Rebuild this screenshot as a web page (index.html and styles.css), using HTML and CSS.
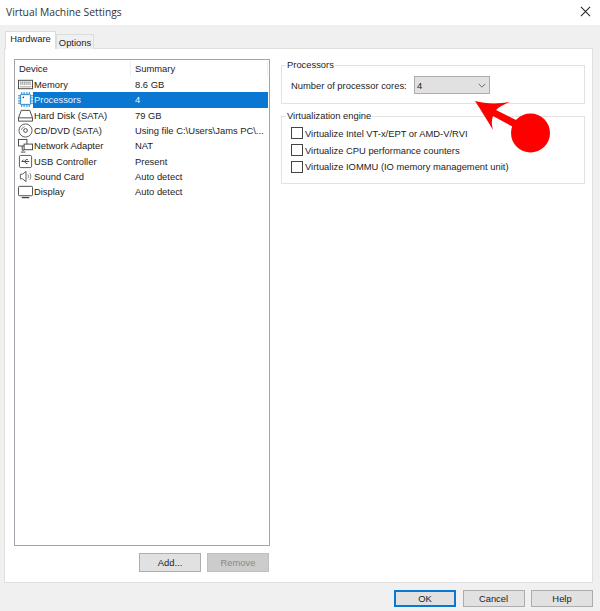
FILE: index.html
```html
<!DOCTYPE html>
<html lang="en">
<head>
  <meta charset="UTF-8" />
  <title>Virtual Machine Settings</title>
  <link rel="stylesheet" href="styles.css">
</head>
<body>
  <div class="window">
    <div class="titlebar">
      <span class="title">Virtual Machine Settings</span>
      <svg class="close" width="11" height="11" viewBox="0 0 12 12"><path d="M1 1L11 11M11 1L1 11" stroke="#222" stroke-width="1.1" fill="none"/></svg>
    </div>

    <div class="tabs">
      <div class="tab active">Hardware</div>
      <div class="tab">Options</div>
    </div>

    <div class="panel">
      <div class="left">
        <div class="list">
          <div class="list-head">
            <span class="col-device">Device</span>
            <span class="col-summary">Summary</span>
          </div>

          <div class="row">
            <svg class="icon" viewBox="0 0 16 16"><rect x="0.5" y="3.5" width="15" height="9" fill="#fff" stroke="#444"/><path d="M2 5.500h12M2 7.500h12" stroke="#666" stroke-dasharray="1.500 .5"/><path d="M2 10.500h12" stroke="#999"/></svg>
            <div class="row-body"><span class="name">Memory</span><span class="value">8.6 GB</span></div>
          </div>
          <div class="row selected">
            <svg class="icon" viewBox="0 0 16 16"><path d="M4 0v16M6.500 0v16M9.500 0v16M12 0v16M0 4h16M0 6.500h16M0 9.500h16M0 12h16" stroke="#2b86c8"/><rect x="2.500" y="2.500" width="11" height="11" rx="1" fill="#d7ecfa" stroke="#1f7fc4"/><rect x="4" y="4" width="8" height="8" fill="#fff"/><rect x="5" y="5" width="1.500" height="1.500" fill="#333"/></svg>
            <div class="row-body"><span class="name">Processors</span><span class="value">4</span></div>
          </div>
          <div class="row">
            <svg class="icon" viewBox="0 0 16 16"><path d="M3.500 2.500h9l3 8v3.500h-15v-3.500z" fill="#fff" stroke="#444"/><path d="M.5 10.500h15" stroke="#444"/></svg>
            <div class="row-body"><span class="name">Hard Disk (SATA)</span><span class="value">79 GB</span></div>
          </div>
          <div class="row">
            <svg class="icon" viewBox="0 0 16 16"><circle cx="8" cy="8" r="7" fill="#fff" stroke="#555"/><circle cx="8" cy="8" r="2" fill="none" stroke="#444"/><path d="M3.500 7.500a4.500 4.500 0 0 1 3.500-3.500" stroke="#888" fill="none"/></svg>
            <div class="row-body"><span class="name">CD/DVD (SATA)</span><span class="value">Using file C:\Users\Jams PC\...</span></div>
          </div>
          <div class="row">
            <svg class="icon" viewBox="0 0 16 16"><rect x="0.5" y="1.500" width="9" height="7" fill="#fff" stroke="#444"/><rect x="6.500" y="6.500" width="9" height="6" fill="#fff" stroke="#444"/><path d="M4.500 8.500v4.500h2M3 15h5" stroke="#444" fill="none"/></svg>
            <div class="row-body"><span class="name">Network Adapter</span><span class="value">NAT</span></div>
          </div>
          <div class="row">
            <svg class="icon" viewBox="0 0 16 16"><rect x="1.500" y="1.500" width="13" height="13" rx="1.500" fill="#fff" stroke="#555"/><path d="M4 8h8M4 8l2-2M7 8l1.500-2h2M7 8l1.500 2h1.500" stroke="#444" fill="none"/></svg>
            <div class="row-body"><span class="name">USB Controller</span><span class="value">Present</span></div>
          </div>
          <div class="row">
            <svg class="icon" viewBox="0 0 16 16"><path d="M2.500 5.500h2.500l3.500-3v11l-3.500-3h-2.500z" fill="#fff" stroke="#555"/><path d="M10.500 6c1 1.300 1 2.700 0 4M12.500 4.500c1.600 2.200 1.600 4.800 0 7" stroke="#777" fill="none"/></svg>
            <div class="row-body"><span class="name">Sound Card</span><span class="value">Auto detect</span></div>
          </div>
          <div class="row">
            <svg class="icon" viewBox="0 0 16 16"><rect x="0.500" y="2.500" width="15" height="10" rx="1" fill="#fff" stroke="#444"/><path d="M4 14.500h8" stroke="#444" stroke-width="1.400"/></svg>
            <div class="row-body"><span class="name">Display</span><span class="value">Auto detect</span></div>
          </div>
        </div>

        <div class="list-buttons">
          <button class="btn">Add...</button>
          <button class="btn disabled">Remove</button>
        </div>
      </div>

      <div class="right">
        <fieldset class="group group-cpu">
          <legend>Processors</legend>
          <div class="cores">
            <span class="cores-label">Number of processor cores:</span>
            <div class="combo">
              <span>4</span>
              <svg width="8" height="5" viewBox="0 0 9 6"><path d="M.5 1L4.500 5L8.500 1" stroke="#555" fill="none"/></svg>
            </div>
          </div>
        </fieldset>

        <fieldset class="group group-virt">
          <legend>Virtualization engine</legend>
          <label class="check"><span class="box"></span>Virtualize Intel VT-x/EPT or AMD-V/RVI</label>
          <label class="check"><span class="box"></span>Virtualize CPU performance counters</label>
          <label class="check"><span class="box"></span>Virtualize IOMMU (IO memory management unit)</label>
        </fieldset>
      </div>
    </div>

    <div class="footer">
      <button class="btn primary">OK</button>
      <button class="btn">Cancel</button>
      <button class="btn">Help</button>
    </div>

    <!-- red annotation drawn over the dialog -->
    <svg class="marker" width="600" height="611" viewBox="0 0 600 611">
      <circle cx="530.500" cy="133" r="19.500" fill="#fe0000"/>
      <path d="M475 101C486 104 498 104 510 102C504 104 499 107 496 110L520 122L515 128L493 116C491 121 492 126 493 130C487 120 481 110 475 101Z" fill="#fe0000"/>
    </svg>
  </div>
</body>
</html>
```

FILE: styles.css
```css
* {
  box-sizing: border-box;
}

html, body {
  margin: 0;
  padding: 0;
}

body {
  font-family: "Liberation Sans", sans-serif;
  font-size: 9.4px;
  color: #1c1c1c;
}

.window {
  position: relative;
  width: 600px;
  height: 611px;
  background: #f0f0f0;
  overflow: hidden;
}

.titlebar {
  display: flex;
  align-items: center;
  justify-content: space-between;
  height: 25px;
  padding: 0 9px 2px 6px;
  background: #fff;
}

.title {
  font-family: "Open Sans", sans-serif;
  font-size: 10.3px;
  color: #333;
}

/* tabs */
.tabs {
  display: flex;
  align-items: flex-end;
  height: 23px;
  padding-left: 5px;
}

.tab {
  width: 38px;
  height: 15px;
  margin-bottom: -1px;
  text-align: center;
  line-height: 15px;
  background: #f0f0f0;
  border: 1px solid #dcdcdc;
  border-bottom: none;
}

.tab.active {
  position: relative;
  z-index: 1;
  width: 51px;
  height: 18px;
  line-height: 14px;
  background: #fff;
}

/* main panel */
.panel {
  display: flex;
  width: 589px;
  height: 535px;
  margin-left: 4px;
  padding: 10px 6px 0 9px;
  background: #fff;
  border: 1px solid #dfdfdf;
}

.left {
  display: flex;
  flex-direction: column;
  width: 256px;
}

.list {
  height: 487px;
  padding: 1px 1px 0 0;
  border: 1px solid #a3a3ab;
}

.list-head {
  display: flex;
  height: 16px;
  line-height: 15px;
}

.col-device {
  width: 116px;
  padding-left: 4px;
  border-right: 1px solid #efefef;
}

.col-summary {
  padding-left: 4px;
  flex: 1;
  border-right: 1px solid #efefef;
}

.row {
  display: flex;
  align-items: center;
  height: 15.33px;
  padding-left: 3px;
}

.icon {
  flex: none;
  width: 15px;
  height: 15px;
}

.row-body {
  display: flex;
  flex: 1;
  height: 100%;
  line-height: 15px;
  padding-left: 1px;
}

.name {
  width: 101px;
}

.value {
  flex: 1;
  white-space: nowrap;
}

.selected .row-body {
  background: #0a78d2;
  color: #e8f3fc;
}

.list-buttons {
  display: flex;
  justify-content: flex-end;
  gap: 6px;
  margin-top: 7px;
  padding-right: 1px;
}

/* buttons */
.btn {
  width: 62px;
  height: 19px;
  padding: 0;
  font: inherit;
  color: #1c1c1c;
  background: #e1e1e1;
  border: 1px solid #adadad;
}

.btn.disabled {
  color: #8a8a8a;
  background: #cccccc;
  border-color: #bfbfbf;
}

.btn.primary {
  border: 2px solid #0a78d2;
}

/* right side */
.right {
  display: flex;
  flex-direction: column;
  gap: 6px;
  width: 304px;
  margin-left: 11px;
}

.group {
  margin: 0;
  padding: 0 0 0 9px;
  border: 1px solid #e2e2e2;
  min-width: 0;
}

.group legend {
  margin-left: -5px;
  padding: 0 1px;
  line-height: 12px;
}

.group-cpu {
  height: 45px;
}

.group-virt {
  height: 74px;
}

.cores {
  display: flex;
  align-items: center;
  gap: 7px;
  margin-top: 5px;
}

.cores-label {
  width: 116px;
  white-space: nowrap;
}

.combo {
  display: flex;
  align-items: center;
  justify-content: space-between;
  width: 76px;
  height: 18px;
  padding: 0 3px 0 2px;
  background: #e1e1e1;
  border: 1px solid #adadad;
}

.check {
  display: flex;
  align-items: center;
  gap: 2px;
  height: 16.7px;
}

.group-virt .check:first-of-type {
  margin-top: 3px;
}

.box {
  flex: none;
  width: 12px;
  height: 12px;
  background: #fff;
  border: 1px solid #444;
}

/* footer */
.footer {
  display: flex;
  justify-content: flex-end;
  gap: 6.5px;
  padding: 7px 7px 0 0;
}

.footer .btn {
  height: 17px;
  line-height: 13px;
}

.marker {
  position: absolute;
  top: 0;
  left: 0;
  pointer-events: none;
}
```
